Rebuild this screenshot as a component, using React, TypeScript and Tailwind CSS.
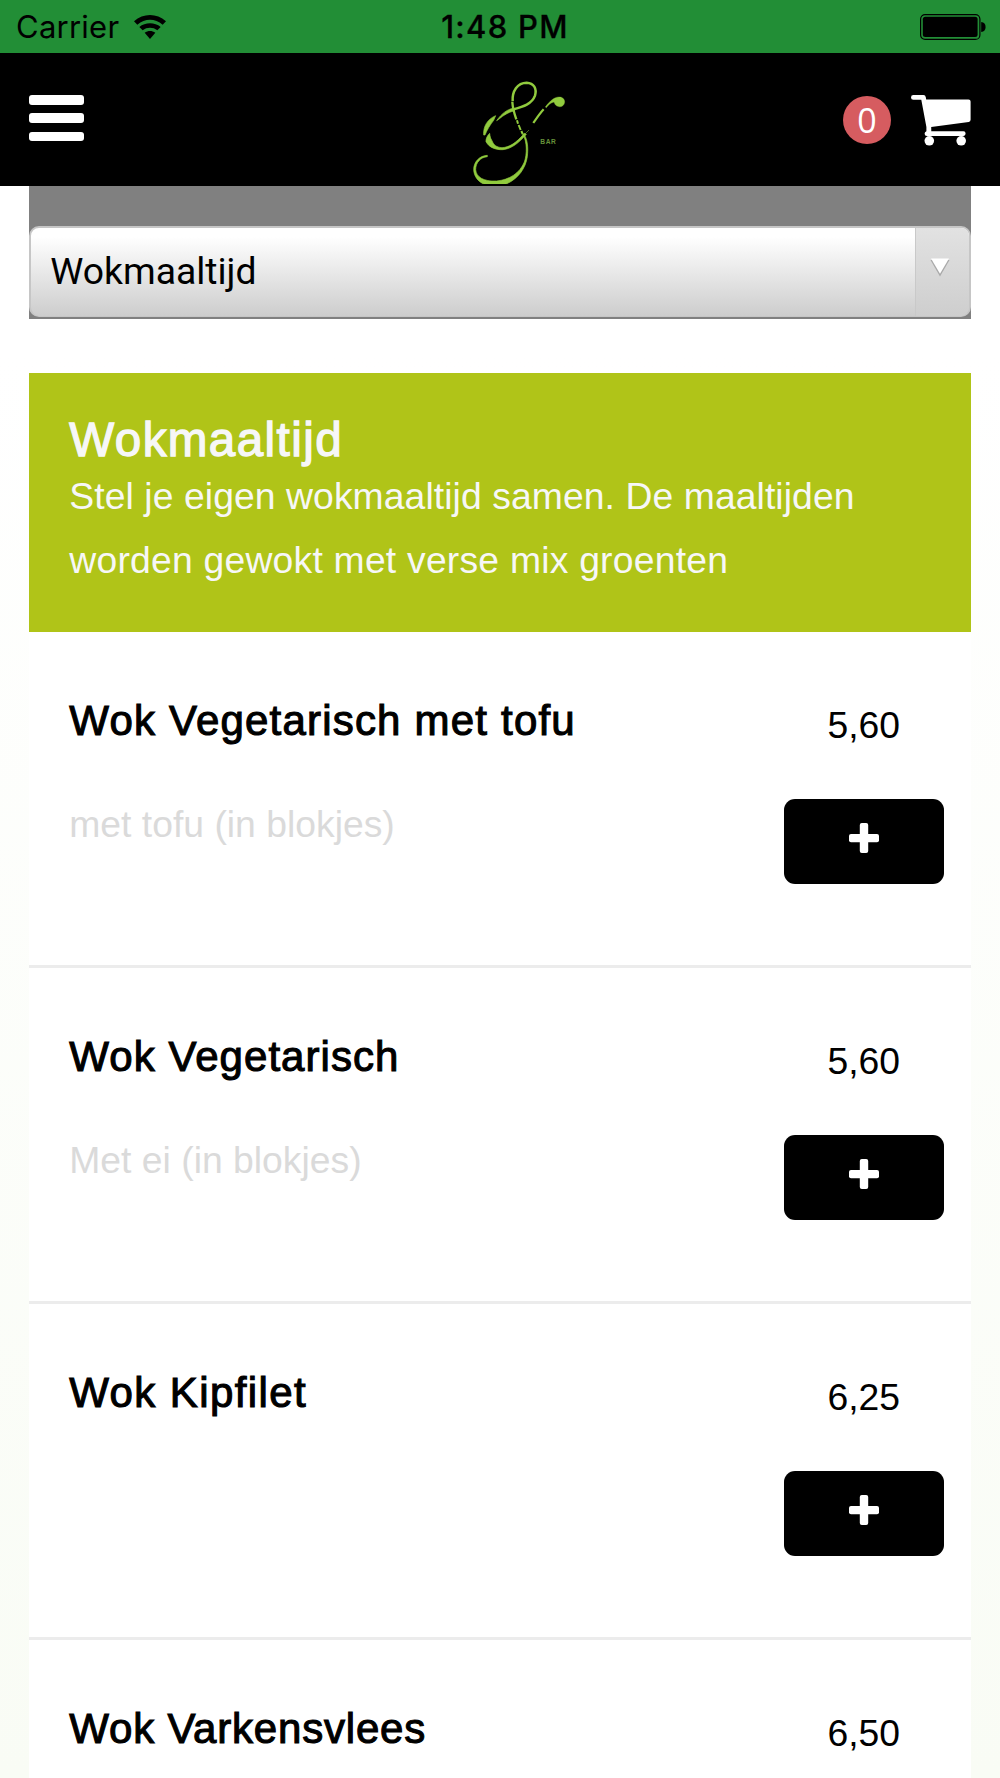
const meals = [
  { name: "Wok Vegetarisch met tofu", description: "met tofu (in blokjes)", price: "5,60", spacing: "tracking-[1.2px]" },
  { name: "Wok Vegetarisch", description: "Met ei (in blokjes)", price: "5,60", spacing: "tracking-[1.05px]" },
  { name: "Wok Kipfilet", description: "", price: "6,25", spacing: "tracking-[1.4px]" },
  { name: "Wok Varkensvlees", description: "", price: "6,50", spacing: "tracking-[0.8px]" },
];

function WifiIcon() {
  return (
    <svg viewBox="0 0 96 72" className="h-6 w-8">
      <path d="M0 19 C28 -6 68 -6 96 19 L86 29 C63 9 33 9 10 29 Z" />
      <path d="M16 36 C34 21 62 21 80 36 L70 46 C57 36 39 36 26 46 Z" />
      <path d="M32 53 C42 46 54 46 64 53 L48 72 Z" />
    </svg>
  );
}

function BatteryIcon() {
  return (
    <svg viewBox="0 0 66 26" className="h-[26px] w-[66px]">
      <rect x="0.6" y="0.6" width="59.3" height="24.8" rx="4.5" fill="none" stroke="#000" strokeWidth="1.2" />
      <rect x="2.8" y="2.8" width="54.8" height="20.2" rx="2.5" />
      <path d="M61.2 8 Q65.6 8.6 65.6 13 Q65.6 17.4 61.2 18 Z" />
    </svg>
  );
}

function StatusBar() {
  return (
    <div className="grid h-[53px] grid-cols-3 items-center bg-[#228e36] pt-px pr-[14px] pl-4 font-[Inter,sans-serif] text-black">
      <div className="flex items-center gap-[15px]">
        <span className="pt-px text-[31px] tracking-[0.25px]">Carrier</span>
        <WifiIcon />
      </div>
      <span className="pt-px pl-2 text-center text-[31px] font-medium tracking-[1.3px] whitespace-nowrap [-webkit-text-stroke:0.3px_black]">
        1:48 PM
      </span>
      <div className="flex justify-end">
        <BatteryIcon />
      </div>
    </div>
  );
}

function Logo() {
  return (
    <svg viewBox="120 240 300 312" className="h-[104px] w-[100px]" fill="none" stroke="#91cb3e" strokeLinecap="butt">
      <path strokeWidth="7.5" d="M248 304 C246 274 262 248 290 248 C312 249 321 266 315 287 C306 312 280 320 250 328" />
      <path strokeWidth="7" d="M247 306 C248 324 253 341 259 358" />
      <path strokeWidth="6" d="M261 361 L264 371 M266 375 L272 390 M274 393 L278 402" />
      <path fill="#91cb3e" strokeWidth="2" d="M252 324 C232 328 216 339 200 362 C211 355 216 349 224 345 C233 339 242 335 254 332 Z" />
      <path fill="#91cb3e" strokeWidth="2" d="M197 347 C173 357 159 379 161 405 L165 405 C171 390 180 375 191 361 Z" />
      <path fill="#91cb3e" strokeWidth="2" d="M179 400 C170 408 167 420 168 425 C178 444 199 450 219 449 C246 446 267 428 289 403 L283 400 C258 430 237 442 216 443 C198 442 190 433 186 422 C181 415 180 408 179 400 Z" />
      <path strokeWidth="1.5" d="M283 404 L297 390" />
      <path strokeWidth="6.5" d="M310 369 C319 356 329 341 341 328" />
      <path fill="#91cb3e" strokeWidth="1" d="M346 321 C360 302 374 290 389 291 C398 291 404 298 404 306 C403 317 393 323 383 319 C376 317 374 311 372 306 C363 308 355 315 349 323 Z" />
      <path fill="#91cb3e" strokeWidth="2" d="M278 402 C292 425 291 463 283 486 C269 520 238 539 200 543 C160 545 139 531 137 509 C137 488 151 472 172 470 L172 466 C148 467 131 486 131 509 C132 529 144 544 161 552 L229 552 C266 535 287 504 292 470 C295 441 293 421 282 402 Z" />
      <text x="331" y="433" fill="#66923a" stroke="none" fontSize="20" fontWeight="bold" letterSpacing="1.6" fontFamily="Liberation Sans, sans-serif">
        BAR
      </text>
    </svg>
  );
}

function CartIcon() {
  return (
    <svg viewBox="0 0 60 51" className="h-[51px] w-[60px]" fill="#fff">
      <path d="M2.4 0 H12.5 Q14.4 0 14.8 2.2 L15.2 4.4 H57.5 Q59.6 4.4 59.6 6.5 V24.8 Q59.6 26.6 57.7 26.9 L20.2 32 L20.3 36.3 H52.5 Q54.6 36.3 54.6 38.6 Q54.6 41 52.5 41 H16 Q13.6 41 13.6 38.7 Q13.6 37 15.4 36.2 V32 L10.3 4.7 H2.4 Q0 4.7 0 2.4 Q0 0 2.4 0 Z" />
      <circle cx="18.3" cy="45.8" r="4.8" />
      <circle cx="50.2" cy="45.8" r="4.8" />
    </svg>
  );
}

function Header() {
  return (
    <header className="grid h-[133.3px] grid-cols-3 bg-black px-[29px]">
      <button aria-label="Menu" className="flex flex-col gap-[8.5px] pt-[42px]">
        <span className="h-[9.8px] w-[55px] rounded-[3px] bg-white" />
        <span className="h-[9.8px] w-[55px] rounded-[3px] bg-white" />
        <span className="h-[9.8px] w-[55px] rounded-[3px] bg-white" />
      </button>
      <div className="flex justify-center pt-[27px] pl-[40px]">
        <Logo />
      </div>
      <div className="flex justify-end gap-5 pt-[42px]">
        <span className="mt-[0.7px] flex size-12 items-center justify-center rounded-full bg-[#d65c60] pt-px font-['Open_Sans',sans-serif] text-[34px] leading-none text-white">
          0
        </span>
        <CartIcon />
      </div>
    </header>
  );
}

function CategorySelect() {
  return (
    <div className="h-[133.2px] bg-[#808080] pt-10">
      <div className="flex h-[91px] overflow-hidden rounded-[10px] border-2 border-b border-[#c6c6c6] bg-linear-to-b from-white from-10% to-[#cdcdcd]">
        <span className="flex-1 pt-px pl-[19px] font-[Roboto,sans-serif] text-[37.3px] leading-[84px] text-black">Wokmaaltijd</span>
        <span className="flex w-[54px] justify-center border-l border-[#c9c9c9] bg-linear-to-b from-[#e2e2e2] to-[#cecece] pt-[30px] pr-1">
          <svg viewBox="0 0 20 20" className="size-5">
            <path d="M0.5 2 H19.5 L10 18.5 Z" fill="#a9a9a9" />
            <path d="M1 0.5 H19 L10 15.8 Z" fill="#fff" />
          </svg>
        </span>
      </div>
    </div>
  );
}

function MealRow({ name, description, price, spacing }: (typeof meals)[number]) {
  return (
    <li className="flex h-[336px] justify-between border-b-[3px] border-[#ececec] bg-white pr-[27px] pl-10">
      <div className="pt-[65.5px]">
        <h3 className={`text-[42px] leading-[48px] text-black [-webkit-text-stroke:1.1px_black] ${spacing}`}>{name}</h3>
        <p className="mt-[54.5px] text-[37.3px] leading-[48px] text-[#dadada]">{description}</p>
      </div>
      <div className="flex w-40 flex-col items-center pt-[69px]">
        <span className="text-[37.3px] leading-[48px] text-black">{price}</span>
        <button aria-label="Toevoegen" className="mt-[50.5px] flex h-[85px] w-40 justify-center rounded-[11px] bg-black pt-[23.5px]">
          <svg viewBox="0 0 30 30" className="size-[30px]" fill="#fff">
            <rect x="0" y="11" width="30" height="8.3" rx="2" />
            <rect x="10.8" y="0" width="8.4" height="30" rx="2" />
          </svg>
        </button>
      </div>
    </li>
  );
}

export default function App() {
  return (
    <div className="h-[1778px] w-[1000px] overflow-hidden bg-linear-to-b from-white from-20% to-[#f9fcf5] font-['Liberation_Sans',Arial,sans-serif]">
      <StatusBar />
      <Header />
      <main className="px-[29.3px]">
        <CategorySelect />
        <section className="mt-[53.5px]">
          <div className="h-[259px] bg-[#b0c418] pt-[43px] pl-10 text-[#f7f7f7]">
            <h2 className="text-[47.6px] leading-[48px] tracking-[1.4px] [-webkit-text-stroke:1.3px_#f7f7f7]">Wokmaaltijd</h2>
            <p className="text-[37.3px] leading-[64px]">
              <span className="block tracking-[0.08px]">Stel je eigen wokmaaltijd samen. De maaltijden</span>
              <span className="block tracking-[0.22px]">worden gewokt met verse mix groenten</span>
            </p>
          </div>
          <ul>
            {meals.map((meal) => (
              <MealRow key={meal.name} {...meal} />
            ))}
          </ul>
        </section>
      </main>
    </div>
  );
}
